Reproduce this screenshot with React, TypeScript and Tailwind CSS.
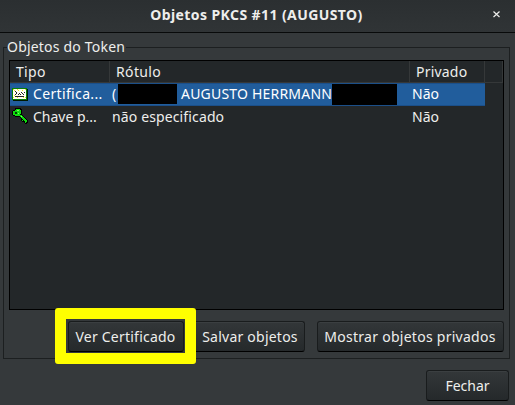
import type { ReactNode } from 'react';

function CertificateIcon() {
  return (
    <svg width="16" height="13" viewBox="0 0 16 13" shapeRendering="crispEdges" className="shrink-0">
      <path d="M1 1h15v12H1z" fill="#001900" />
      <path d="M0 0h15v12H0z" fill="#087d08" />
      <path d="M1 1h13v10H1z" fill="#fffff0" />
      <path d="M1 1h1v1H1zM2 2h1v1H2zM5 1h1v1H5zM6 2h1v1H6zM10 2h1v1h-1zM12 4h1v1h-1zM2 7h1v1H2zM1 9h1v1H1zM5 9h1v1H5zM11 9h1v1h-1zM13 9h1v1h-1zM13 1h1v1h-1z" fill="#e8e820" />
      <path d="M3 3h1v1H3zM4 4h1v1H4zM9 4h1v1H9zM12 4h1v1h-1zM3 6h1v1H3zM4 5h1v1H4zM6 6h1v1H6zM7 5h1v1H7zM8 6h1v1H8zM10 5h1v1h-1zM11 6h1v1h-1zM3 8h9v1H3z" fill="#222" />
    </svg>
  );
}

function KeyIcon() {
  return (
    <svg width="16" height="16" viewBox="0 0 16 16" shapeRendering="crispEdges" className="shrink-0">
      <path d="M3 0h6v1h1v6h1v1h1v1h1v1h1v1h1v1h1v3h-1v1h-2v-1h-1v-1h-2v-1h-1v-2H9v-1H8V9H3V8H1V7H0V3h1V2h2z" fill="#000" />
      <path d="M4 1h4v1h1v4H8v2H3V7H1V3h2V2h1z" fill="#0fdc0f" />
      <path d="M8 7h2v1h1v1h1v1h1v1h1v1h1v2h-1v1h-1v-2h-1v-1h-1v-1h-1v-1H9V9H8z" fill="#0fdc0f" />
      <path d="M10 12h1v1h-1z" fill="#0fdc0f" />
      <path d="M3 4h2v2H3z" fill="#063b06" />
      <path d="M5 2h2v1H5zM6 5h1v1H6zM9 8h1v1H9z" fill="#7dff55" />
    </svg>
  );
}

function Button({ className, text, children }: { className: string; text: string; children: ReactNode }) {
  return (
    <button
      className={`flex h-[31px] shrink-0 items-center justify-center rounded-[3px] border border-[#191c1d] border-b-black bg-linear-to-b from-[#333739] to-[#25292b] shadow-[inset_0_1px_0_#3b3f41] ${className}`}
    >
      <span className={`whitespace-nowrap ${text}`}>{children}</span>
    </button>
  );
}

export default function App() {
  return (
    <div className="flex h-[405px] w-[515px] flex-col overflow-hidden bg-[#35393b] font-['Noto_Sans','Open_Sans',sans-serif] text-[14px] leading-5 text-[#eeeeec]">
      <header className="relative flex h-[33px] shrink-0 items-center justify-center border-b border-[#080a0a] bg-linear-to-b from-[#2b2f31] to-[#303436] pb-[3px]">
        <h1 className="whitespace-nowrap pr-[2px] text-[14px] font-bold tracking-[0.41px]">Objetos PKCS #11 (AUGUSTO)</h1>
        <button aria-label="Fechar janela" className="absolute top-[11px] right-[15px]">
          <svg width="7" height="7" viewBox="0 0 7 7" className="block">
            <path d="M0.5 0.5l6 5.5M6.5 0.5l-6 5.5" stroke="#eeeeec" strokeWidth="1.2" />
          </svg>
        </button>
      </header>

      <fieldset className="mt-1 ml-[3px] h-[322px] w-[507px] shrink-0 border border-[#1c1f20] pl-[5px]">
        <legend className="-ml-[2px] h-5 w-[119px] whitespace-nowrap tracking-[0.2px]">Objetos do Token</legend>
        <div className="mt-[3px] h-[250px] w-[495px] border border-black bg-[#232729]">
          <div className="flex h-[22px] border-b border-[#353839] leading-[22px]">
            <div className="w-[100px] border-r border-[#353839] pl-[6px] tracking-[0.3px]">Tipo</div>
            <div className="w-[300px] border-r border-[#353839] pl-[6px] tracking-[0.35px]">Rótulo</div>
            <div className="w-[75px] border-r border-[#353839] pl-[6px] tracking-[0.2px]">Privado</div>
            <div className="w-[18px] border-r border-[#353839]" />
          </div>
          <div className="flex h-[23px] w-[475px] items-center border-y border-[#1b4f89] bg-[#215d9c] text-white">
            <div className="flex w-[102px] items-center gap-[5px] pl-[2px]">
              <CertificateIcon />
              <span className="-mt-[2px] tracking-[0.35px]">Certifica...</span>
            </div>
            <div className="flex w-[300px] items-center whitespace-nowrap">
              <span className="-mt-[2px] w-[6px]">(</span>
              <span className="-mt-[2px] h-5 w-[59px] shrink-0 bg-black" />
              <span className="-mt-[2px] w-[155px] shrink-0 pl-1 tracking-[0.2px]">AUGUSTO HERRMANN</span>
              <span className="h-[21px] w-[65px] shrink-0 bg-black" />
            </div>
            <span className="-mt-[2px]">Não</span>
          </div>
          <div className="flex h-[23px] w-[475px] items-center">
            <div className="flex w-[102px] items-center gap-[5px] pl-[2px]">
              <span className="-mt-[3px]">
                <KeyIcon />
              </span>
              <span className="-mt-[2px]">Chave p...</span>
            </div>
            <span className="-mt-[2px] w-[300px] tracking-[0.13px]">não especificado</span>
            <span className="-mt-[2px]">Não</span>
          </div>
        </div>
        <div className="mt-[11px] flex w-[495px] justify-end">
          <Button className="mr-2 w-[116px]" text="-ml-px tracking-[0.22px]">Ver Certificado</Button>
          <Button className="mr-3 w-[113px]" text="ml-[3px] tracking-[0.23px]">Salvar objetos</Button>
          <Button className="w-[187px]" text="-ml-px tracking-[0.27px]">Mostrar objetos privados</Button>
        </div>
      </fieldset>

      <footer className="mt-[11px] flex justify-end pr-[6px]">
        <Button className="w-[83px]" text="">Fechar</Button>
      </footer>

      <div className="pointer-events-none absolute top-[308px] left-[55px] h-[56px] w-[141px] rounded-[3px] border-[11px] border-[#ffff00]" />
    </div>
  );
}
